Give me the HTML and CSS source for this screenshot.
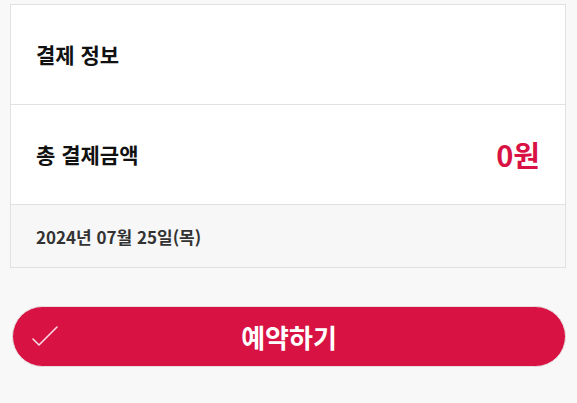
FILE: index.html
```html
<!DOCTYPE html>
<html lang="ko">
<head>
<meta charset="utf-8">
<link rel="stylesheet" href="styles.css">
</head>
<body>
<div class="page">
  <section class="card">
    <div class="row row-title">
      <h2 class="title">결제 정보</h2>
    </div>
    <div class="row row-total">
      <span class="label">총 결제금액</span>
      <span class="amount">0원</span>
    </div>
    <div class="row row-date">
      <span class="date">2024년 07월 25일(목)</span>
    </div>
  </section>
  <button class="reserve" type="button">
    <svg class="check" width="28" height="22" viewBox="0 0 28 22" aria-hidden="true">
      <path d="M1 13 L7 19 L25 1" fill="none" stroke="rgba(255,255,255,0.85)" stroke-width="1.6" stroke-linecap="round" stroke-linejoin="round"/>
    </svg>
    <span class="reserve-text">예약하기</span>
  </button>
</div>
</body>
</html>
```

FILE: styles.css
```css
* { box-sizing: border-box; }
html, body {
  margin: 0;
  padding: 0;
  background: #f8f8f8;
}
body {
  font-family: "Noto Sans CJK KR", "Noto Sans", sans-serif;
  color: #111;
}
.page {
  padding: 4px 11px 0 10px;
  display: flex;
  flex-direction: column;
}
.card {
  width: 100%;
  border: 1px solid #e1e1e1;
  background: #fff;
  display: flex;
  flex-direction: column;
}
.row {
  display: flex;
  align-items: center;
  justify-content: space-between;
  padding: 0 25px 0 25px;
}
.row-title {
  height: 100px;
  border-bottom: 1px solid #e1e1e1;
}
.row-total {
  height: 100px;
  border-bottom: 1px solid #e1e1e1;
}
.row-date {
  height: 62px;
  background: #f7f7f7;
}
.title {
  margin: 0;
  font-size: 21px;
  font-weight: 700;
  line-height: 1;
  color: #111;
}
.label {
  font-size: 21px;
  font-weight: 700;
  line-height: 1;
  color: #111;
}
.amount {
  font-size: 29px;
  font-weight: 700;
  line-height: 1;
  color: #d81244;
}
.date {
  font-size: 17px;
  font-weight: 700;
  line-height: 1;
  color: #333;
}
.reserve {
  margin: 38px 0 0 2px;
  height: 61px;
  border: 1px solid #e4dfe0;
  border-radius: 31px;
  background: #d81344;
  position: relative;
  display: flex;
  align-items: center;
  justify-content: center;
  padding: 0;
  cursor: pointer;
  font-family: inherit;
}
.check {
  position: absolute;
  left: 19px;
  top: 19px;
}
.reserve-text {
  font-size: 26px;
  font-weight: 700;
  color: #fff;
  line-height: 1;
}
```
